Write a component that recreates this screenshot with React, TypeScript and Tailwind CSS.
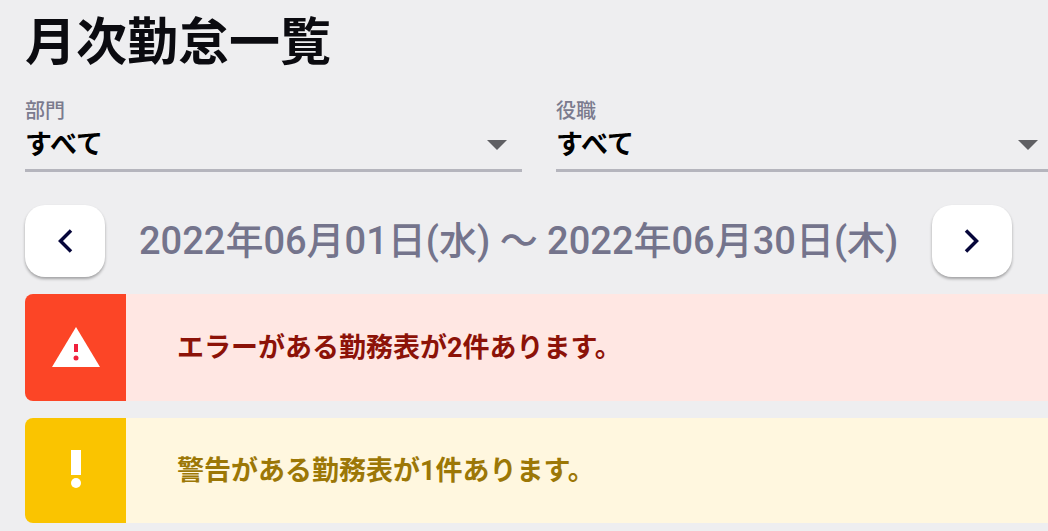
import { useState } from "react";

const filters = [
  { id: "department", label: "部門", options: ["すべて"] },
  { id: "position", label: "役職", options: ["すべて"] },
];

const alerts = [
  { type: "error" as const, message: "エラーがある勤務表が2件あります。" },
  { type: "warning" as const, message: "警告がある勤務表が1件あります。" },
];

const alertStyles = {
  error: { box: "bg-[#ffe7e3] text-[#8c1208] h-[107px]", icon: "bg-[#fc4526]" },
  warning: { box: "bg-[#fff7df] text-[#9c7706] h-[105px]", icon: "bg-[#fac400]" },
};

const ErrorIcon = () => (
  <svg width="48" height="42" viewBox="0 0 48 42" aria-hidden="true">
    <path d="M24 0L48 40H0Z" fill="#fff" />
    <path d="M22 17h4v8h-4z" fill="#f0203c" />
    <circle cx="24" cy="31" r="2.5" fill="#f0203c" />
  </svg>
);

const WarningIcon = () => (
  <svg width="10" height="42" viewBox="0 0 10 42" aria-hidden="true">
    <path d="M0 0h10v25H0z" fill="#fff" />
    <circle cx="5" cy="33" r="5" fill="#fff" />
  </svg>
);

const FilterSelect = ({ id, label, options }: (typeof filters)[number]) => {
  const [value, setValue] = useState(options[0]);

  return (
    <div className="border-b-3 border-[#b5b5bd]">
      <label htmlFor={id} className="block text-[20px] leading-6 text-[#7b7b8e]">
        {label}
      </label>
      <div className="grid items-center pb-0.5">
        <select
          id={id}
          value={value}
          onChange={(e) => setValue(e.target.value)}
          className="col-start-1 row-start-1 h-11 w-full appearance-none bg-transparent text-[27px] leading-9 font-bold text-black outline-none"
        >
          {options.map((option) => (
            <option key={option}>{option}</option>
          ))}
        </select>
        {/* Dropdown arrow */}
        <svg
          className="pointer-events-none col-start-1 row-start-1 mr-[15px] justify-self-end"
          width="20"
          height="10"
          viewBox="0 0 20 10"
          aria-hidden="true"
        >
          <path d="M0 0h20L10 10z" fill="#5f5f63" />
        </svg>
      </div>
    </div>
  );
};

const MonthButton = ({ label, path }: { label: string; path: string }) => (
  <button
    type="button"
    aria-label={label}
    className="flex h-[72px] w-20 shrink-0 items-center justify-center rounded-[20px] bg-white shadow-[0_2px_3px_rgba(0,0,0,0.32)]"
  >
    <svg width="16" height="24" viewBox="0 0 16 24" fill="none" stroke="#06063a" strokeWidth="3.5" aria-hidden="true">
      <path d={path} />
    </svg>
  </button>
);

const App = () => {
  return (
    <main className="min-h-screen overflow-hidden bg-[#eeeef0] pt-[13px] pb-2 pl-[25px] font-['Roboto','Noto_Sans_CJK_JP',sans-serif] font-medium">
      <h1 className="text-[51px] leading-[60px] font-bold text-[#0b0b10]">月次勤怠一覧</h1>

      {/* Filters */}
      <div className="mt-[26px] -mr-[5px] grid grid-cols-2 gap-[34px]">
        {filters.map((filter) => (
          <FilterSelect key={filter.id} {...filter} />
        ))}
      </div>

      {/* Period */}
      <div className="mt-[33px] flex items-center gap-[34px]">
        <MonthButton label="前の月" path="M14 1.5L3.5 12L14 22.5" />
        <p className="text-[38px] leading-[56px] whitespace-nowrap text-[#74748c]">
          2022年06月01日(水) ～ 2022年06月30日(木)
        </p>
        <MonthButton label="次の月" path="M2 1.5L12.5 12L2 22.5" />
      </div>

      {/* Alerts */}
      <div className="mt-[17px] flex flex-col gap-[17px]">
        {alerts.map(({ type, message }) => (
          <div
            key={type}
            role="alert"
            className={`flex items-center overflow-hidden rounded-l-lg ${alertStyles[type].box}`}
          >
            <div className={`flex h-full w-[101px] shrink-0 items-center justify-center ${alertStyles[type].icon}`}>
              {type === "error" ? <ErrorIcon /> : <WarningIcon />}
            </div>
            <p className="pl-[51px] text-[27px] leading-10 font-bold">{message}</p>
          </div>
        ))}
      </div>
    </main>
  );
};

export default App;
